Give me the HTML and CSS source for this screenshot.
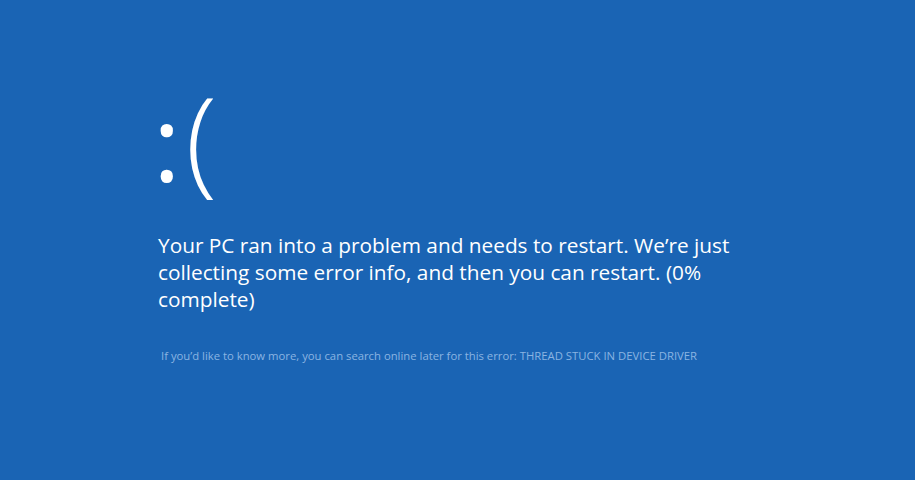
FILE: index.html
```html
<!DOCTYPE html>
<html>
<head>
<meta charset="utf-8">
<link rel="stylesheet" href="styles.css">
</head>
<body>
<div class="screen">
  <div class="content">
    <div class="face"><span class="colon">:</span><span class="paren">(</span></div>
    <p class="message">Your PC ran into a problem and needs to restart. We’re just collecting some error info, and then you can restart. (0% complete)</p>
    <p class="info">If you’d like to know more, you can search online later for this error: THREAD STUCK IN DEVICE DRIVER</p>
  </div>
</div>
</body>
</html>
```
FILE: styles.css
```css
html, body {
  margin: 0;
  padding: 0;
  background: #1a64b4;
}
.screen {
  width: 915px;
  height: 480px;
  background: #1a64b4;
  color: #ffffff;
  font-family: "Open Sans", "Noto Sans", sans-serif;
  overflow: hidden;
}
.content {
  padding-top: 72px;
  padding-left: 153px;
}
.face {
  line-height: 130px;
  height: 130px;
  display: flex;
  align-items: baseline;
}
.colon {
  font-size: 105px;
  font-weight: 400;
}
.paren {
  font-size: 116px;
  font-weight: 300;
  margin-left: 5px;
}
.message {
  margin: 30px 0 0 5px;
  width: 620px;
  font-size: 20.8px;
  line-height: 27px;
}
.info {
  margin: 35px 0 0 8px;
  font-size: 11.3px;
  color: #8ab4e2;
}
```
